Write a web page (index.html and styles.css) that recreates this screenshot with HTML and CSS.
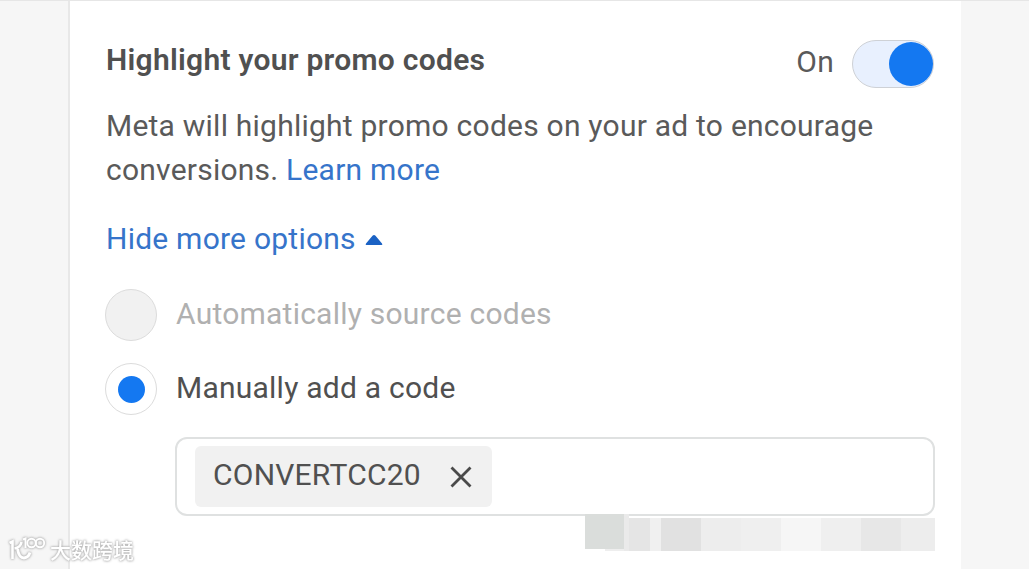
FILE: index.html
```html
<!DOCTYPE html>
<html lang="en">
<head>
    <meta charset="UTF-8" />
    <meta name="viewport" content="width=device-width, initial-scale=1.0"/>
    <title>Promo codes</title>
    <link rel="stylesheet" href="styles.css">
</head>
<body>
<main class="panel">
    <header class="panel-header">
        <h1>Highlight your promo codes</h1>
        <div class="switch-group">
            <span class="switch-label">On</span>
            <span class="switch"><span class="knob"></span></span>
        </div>
    </header>

    <p class="description">
        Meta will highlight promo codes on your ad to encourage<br>
        conversions. <a href="#">Learn more</a>
    </p>

    <a class="toggle-options" href="#">
        <span>Hide more options</span>
        <svg width="18" height="12" viewBox="0 0 18 12"><path d="M1.5 12 Q0 12 1 10.5 L7.5 2.8 Q9 1 10.5 2.8 L17 10.5 Q18 12 16.5 12 Z" fill="#1b62c4"/></svg>
    </a>

    <div class="option disabled">
        <span class="radio"></span>
        <span>Automatically source codes</span>
    </div>
    <div class="option">
        <span class="radio"><span class="dot"></span></span>
        <span class="option-manual">Manually add a code</span>
    </div>

    <div class="code-field">
        <span class="chip">
            <span class="chip-text">CONVERTCC20</span>
            <svg width="22" height="22" viewBox="0 0 22 22"><path d="M1.5 1.5 L20.5 20.5 M20.5 1.5 L1.5 20.5" stroke="#4a4a4a" stroke-width="2.8" fill="none"/></svg>
        </span>
    </div>
</main>

<svg class="mosaic" width="350" height="38" viewBox="0 0 350 38" shape-rendering="crispEdges">
    <rect x="20" y="33" width="24" height="4" fill="#eeeeee"/>
    <rect x="39" y="0" width="5" height="37" fill="#eaeaea"/>
    <rect x="0" y="0" width="39" height="35" fill="#dadddb"/>
    <rect x="44" y="4" width="21" height="33" fill="#e5e5e5"/>
    <rect x="65" y="4" width="11" height="33" fill="#f0f0f0"/>
    <rect x="76" y="4" width="40" height="33" fill="#e1e1e1"/>
    <rect x="116" y="4" width="40" height="33" fill="#ededed"/>
    <rect x="156" y="4" width="40" height="33" fill="#efefef"/>
    <rect x="196" y="4" width="40" height="33" fill="#f6f6f6"/>
    <rect x="236" y="4" width="40" height="33" fill="#efefef"/>
    <rect x="276" y="4" width="40" height="33" fill="#e7e7e7"/>
    <rect x="316" y="4" width="34" height="33" fill="#ededed"/>
</svg>

<div class="watermark">
    <svg width="38" height="28" viewBox="0 0 38 28" fill="none" stroke="#fff">
        <path d="M1.5 9 L4.5 7.5 V25 M13.5 8 Q12.5 13.5 6.5 14.5" stroke-width="2.6"/>
        <path d="M9.5 15 Q11 24 16 24 Q20.5 23.5 22 18.5" stroke-width="2.8"/>
        <path d="M15 5.5 L17.5 4.5 V14" stroke-width="2"/>
        <circle cx="23.5" cy="9" r="4.2" stroke-width="1.9"/>
        <circle cx="32" cy="9" r="4.2" stroke-width="1.9"/>
    </svg>
    <span>大数跨境</span>
</div>
</body>
</html>
```

FILE: styles.css
```css
:root {
    --primary: #1478f1;
    --link: #3674ca;
    --text: #5a5a5a;
    --text-dark: #505050;
    --text-light: #b0b0b0;
    --border: #dfe1e1;
    --bg: #f6f6f6;
}

* {
    box-sizing: border-box;
}

body {
    margin: 0;
    width: 1029px;
    height: 569px;
    overflow: hidden;
    background: var(--bg);
    border-top: 1px solid #e6e6e6;
    color: var(--text);
    font-family: Roboto, "Liberation Sans", sans-serif;
    font-size: 30px;
    line-height: 44px;
    letter-spacing: 0.23px;
    white-space: nowrap;
}

a {
    color: var(--link);
    text-decoration: none;
}

.panel {
    width: 893px;
    height: 568px;
    margin-left: 68px;
    padding: 37px 27px 0 35px;
    background: #fff;
    border-left: 2px solid #e8e8e8;
}

.panel-header {
    display: flex;
    justify-content: space-between;
    height: 66px;
    padding-left: 1px;
}

h1 {
    margin: 0;
    color: var(--text-dark);
    font-size: 30px;
    font-weight: 600;
    letter-spacing: 0.27px;
}

.switch-group {
    display: flex;
    gap: 18px;
    padding-top: 2px;
}

.switch {
    display: flex;
    justify-content: flex-end;
    align-items: center;
    width: 82px;
    height: 48px;
    border: 1.5px solid #ced1d6;
    border-radius: 24px;
    background: #e8f0fe;
}

.knob {
    width: 44px;
    height: 44px;
    border-radius: 50%;
    background: var(--primary);
}

.description {
    margin: 0 0 25px;
    padding-left: 1px;
}

.toggle-options {
    display: flex;
    align-items: center;
    gap: 9px;
    height: 44px;
    margin-bottom: 28px;
    padding-left: 1px;
}

.option {
    display: flex;
    gap: 18px;
    height: 74px;
}

.disabled {
    color: var(--text-light);
}

.option > span:last-child {
    padding: 3px 0 0 1px;
}

.option-manual {
    color: var(--text-dark);
}

.radio {
    display: flex;
    align-items: center;
    justify-content: center;
    width: 52px;
    height: 52px;
    border: 1.5px solid #dcdcdc;
    border-radius: 50%;
}

.disabled .radio {
    background: #f1f1f1;
}

.dot {
    width: 27px;
    height: 27px;
    border-radius: 50%;
    background: var(--primary);
}

.code-field {
    width: 760px;
    height: 79px;
    margin-left: 70px;
    padding: 7px 18px;
    border: 2px solid var(--border);
    border-radius: 12px;
}

.chip {
    display: flex;
    align-items: center;
    justify-content: space-between;
    width: 297px;
    height: 61px;
    padding: 0 20px 0 18px;
    border-radius: 6px;
    background: #f1f1f1;
}

.chip-text {
    padding-bottom: 3px;
    color: var(--text-dark);
}

/* pixelated strip over the lower edge of the field */
.mosaic {
    position: absolute;
    left: 585px;
    top: 514px;
}

.watermark {
    position: absolute;
    left: 8px;
    top: 534px;
    display: flex;
    gap: 4px;
    color: #fff;
    font: 500 21px/30px "Noto Sans CJK SC", sans-serif;
    letter-spacing: 0;
    filter: drop-shadow(0 0 1px #aaa) drop-shadow(0 0 1px #ccc);
}
```
